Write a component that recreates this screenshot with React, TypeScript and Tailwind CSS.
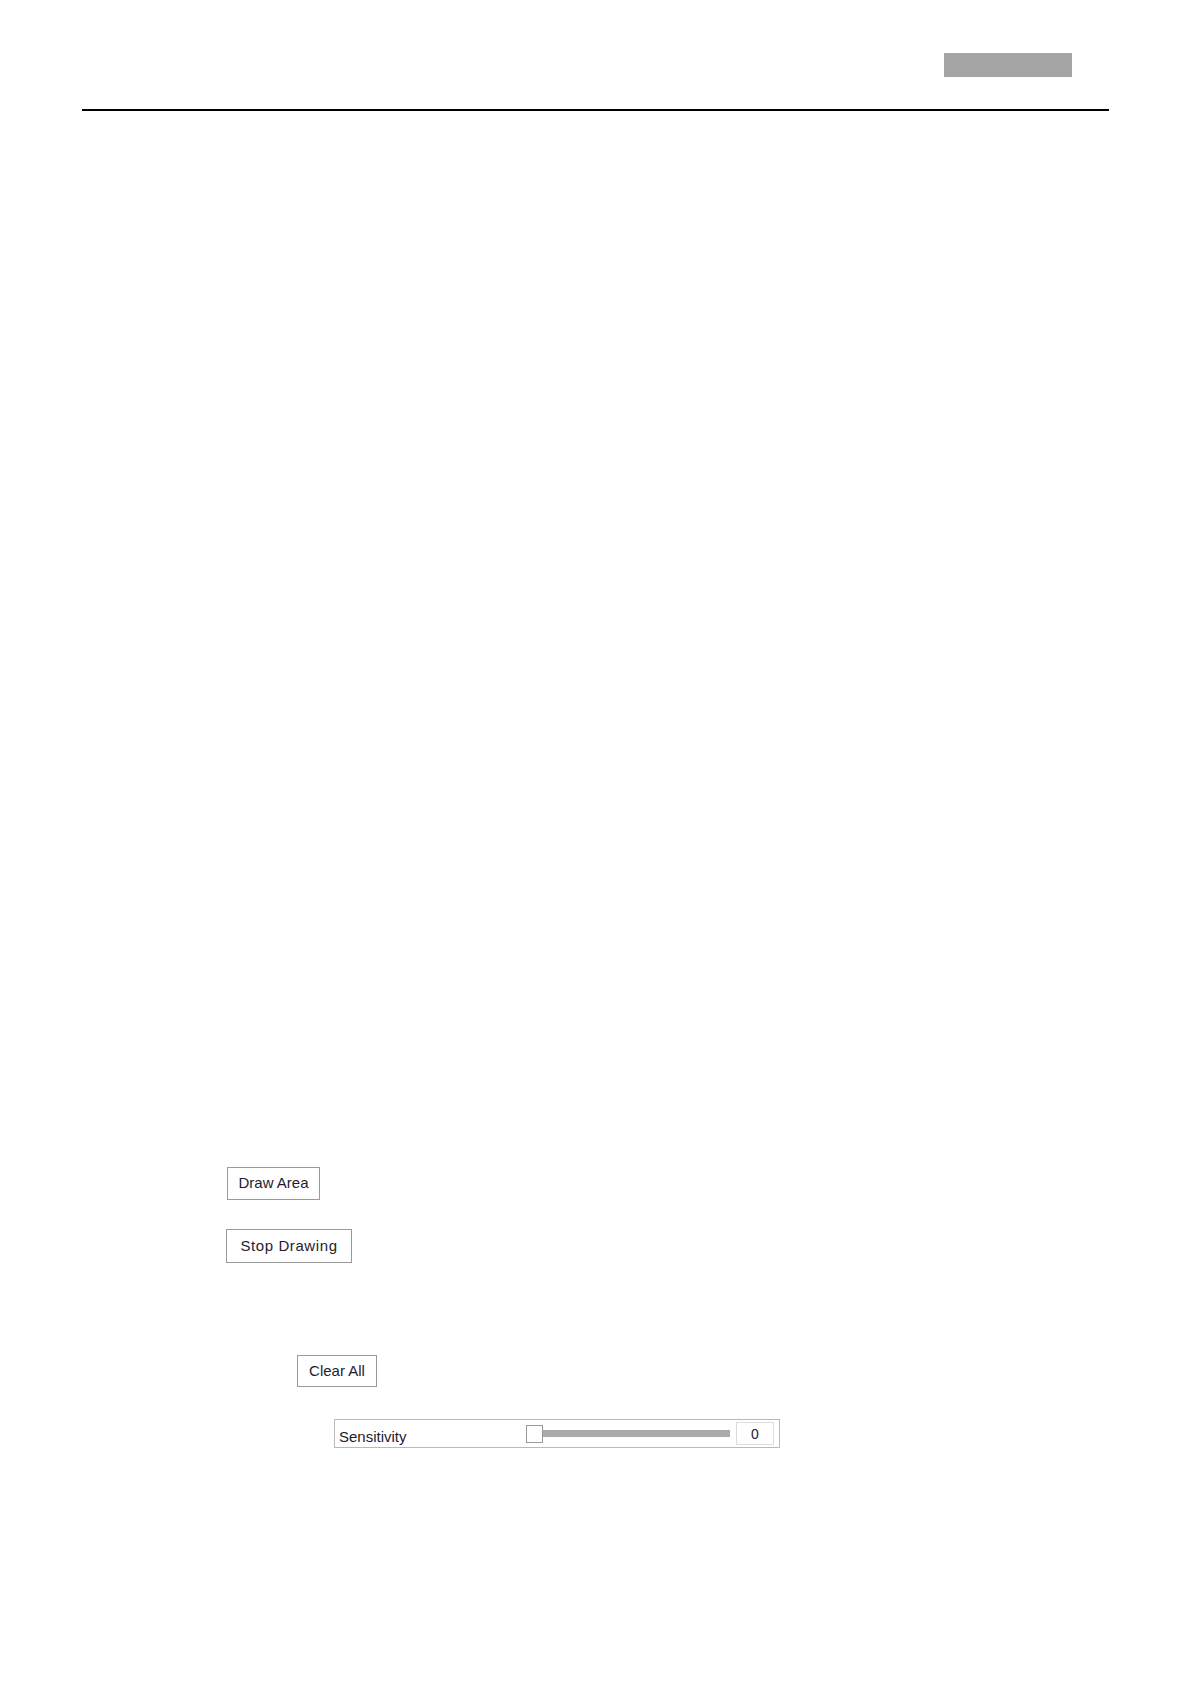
import React from 'react';

const font = { fontFamily: '"Liberation Sans", Arial, sans-serif' };

function Btn({ label, className }: { label: string; className: string }) {
  return (
    <button
      className={`flex items-center justify-center border border-[#9a9a9a] bg-white text-[15px] text-[#221c30] ${className}`}
    >
      {label}
    </button>
  );
}

export default function App() {
  return (
    <div className="min-h-[1684px] w-[1191px] bg-white" style={font}>
      <div className="px-[82px]">
        {/* header */}
        <div className="flex justify-end pt-[53px] pr-[37px]">
          <div className="h-[24px] w-[128px] bg-[#a5a5a5]" />
        </div>
        <div className="mt-[32px] h-[2px] w-full bg-black" />

        {/* controls */}
        <div className="mt-[1056px] flex flex-col">
          <Btn label="Draw Area" className="ml-[145px] h-[33px] w-[93px]" />
          <Btn label="Stop Drawing" className="ml-[144px] mt-[29px] h-[34px] w-[126px] tracking-[0.6px]" />
          <Btn label="Clear All" className="ml-[215px] mt-[92px] h-[32px] w-[80px]" />

          <div className="ml-[252px] mt-[32px] flex h-[29px] w-[446px] items-center border border-[#b9b9b9]">
            <span className="w-[191px] pl-[4px] pt-[7px] text-[15px] text-[#221c30]">Sensitivity</span>
            <div className="flex items-center">
              <div className="h-[18px] w-[17px] border border-[#9a9a9a] bg-white" />
              <div className="h-[7px] w-[187px] bg-[#ababab]" />
            </div>
            <div className="ml-[6px] flex h-[23px] w-[38px] items-center justify-center border border-[#dcdcdc] pt-[2px] text-[14px] text-[#221c30]">
              0
            </div>
          </div>
        </div>
      </div>
    </div>
  );
}
